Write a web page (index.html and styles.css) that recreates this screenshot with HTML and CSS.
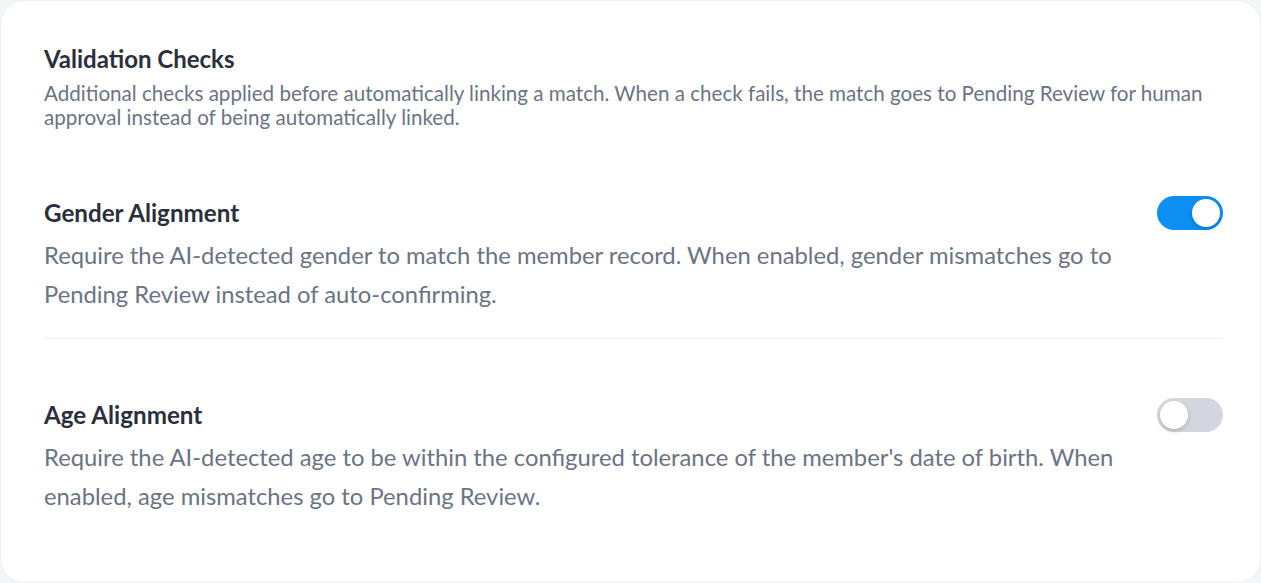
FILE: index.html
```html
<!DOCTYPE html>
<html lang="en">
<head>
<meta charset="utf-8">
<title>Validation Checks</title>
<link rel="stylesheet" href="styles.css">
</head>
<body>
<section class="card">
  <header class="section-head">
    <h2 class="section-title">Validation Checks</h2>
    <p class="section-desc">Additional checks applied before automatically linking a match. When a check fails, the match goes to Pending Review for human approval instead of being automatically linked.</p>
  </header>

  <div class="setting">
    <div class="setting-text">
      <h3 class="setting-title">Gender Alignment</h3>
      <p class="setting-desc">Require the AI-detected gender to match the member record. When enabled, gender mismatches go to Pending Review instead of auto-confirming.</p>
    </div>
    <button class="toggle toggle-on" aria-pressed="true"><span class="knob"></span></button>
  </div>

  <div class="setting setting-last">
    <div class="setting-text">
      <h3 class="setting-title">Age Alignment</h3>
      <p class="setting-desc">Require the AI-detected age to be within the configured tolerance of the member's date of birth. When enabled, age mismatches go to Pending Review.</p>
    </div>
    <button class="toggle" aria-pressed="false"><span class="knob"></span></button>
  </div>
</section>
</body>
</html>
```

FILE: styles.css
```css
* { box-sizing: border-box; }
html, body { margin: 0; padding: 0; }
body {
  background: #f4f5f7;
  font-family: "Lato", "Noto Sans", sans-serif;
  width: 1261px;
  height: 583px;
  overflow: hidden;
}
.card {
  background: #ffffff;
  border: 1px solid #eceef1;
  border-radius: 24px;
  height: 583px;
  padding: 44px 37px 0 43px;
}
.section-title {
  margin: 0;
  font-size: 24px;
  line-height: 28px;
  font-weight: 700;
  color: #2b2f3c;
}
.section-desc {
  margin: 8px 0 0;
  font-size: 20.6px;
  line-height: 24px;
  color: #6b7385;
}
.setting {
  display: flex;
  align-items: flex-start;
  gap: 24px;
  padding: 69px 0 24px;
  border-bottom: 1px solid #eeeff1;
}
.setting-last {
  border-bottom: none;
  padding-top: 61px;
}
.setting-text { flex: 1; min-width: 0; }
.setting-title {
  margin: 0;
  font-size: 24.2px;
  line-height: 30px;
  font-weight: 700;
  color: #2b2f3c;
}
.setting-desc {
  margin: 8px 0 0;
  font-size: 23.8px;
  line-height: 39px;
  color: #6b7385;
}
.toggle {
  flex: none;
  width: 66px;
  height: 34px;
  margin-top: -2px;
  border: none;
  padding: 3px;
  border-radius: 17px;
  background: #d3d6dd;
  display: flex;
  align-items: center;
  justify-content: flex-start;
  cursor: pointer;
}
.toggle-on {
  background: #0b8ff2;
  justify-content: flex-end;
}
.knob {
  width: 28px;
  height: 28px;
  border-radius: 50%;
  background: #ffffff;
  box-shadow: 0 2px 4px rgba(0, 0, 0, 0.18);
}
```
